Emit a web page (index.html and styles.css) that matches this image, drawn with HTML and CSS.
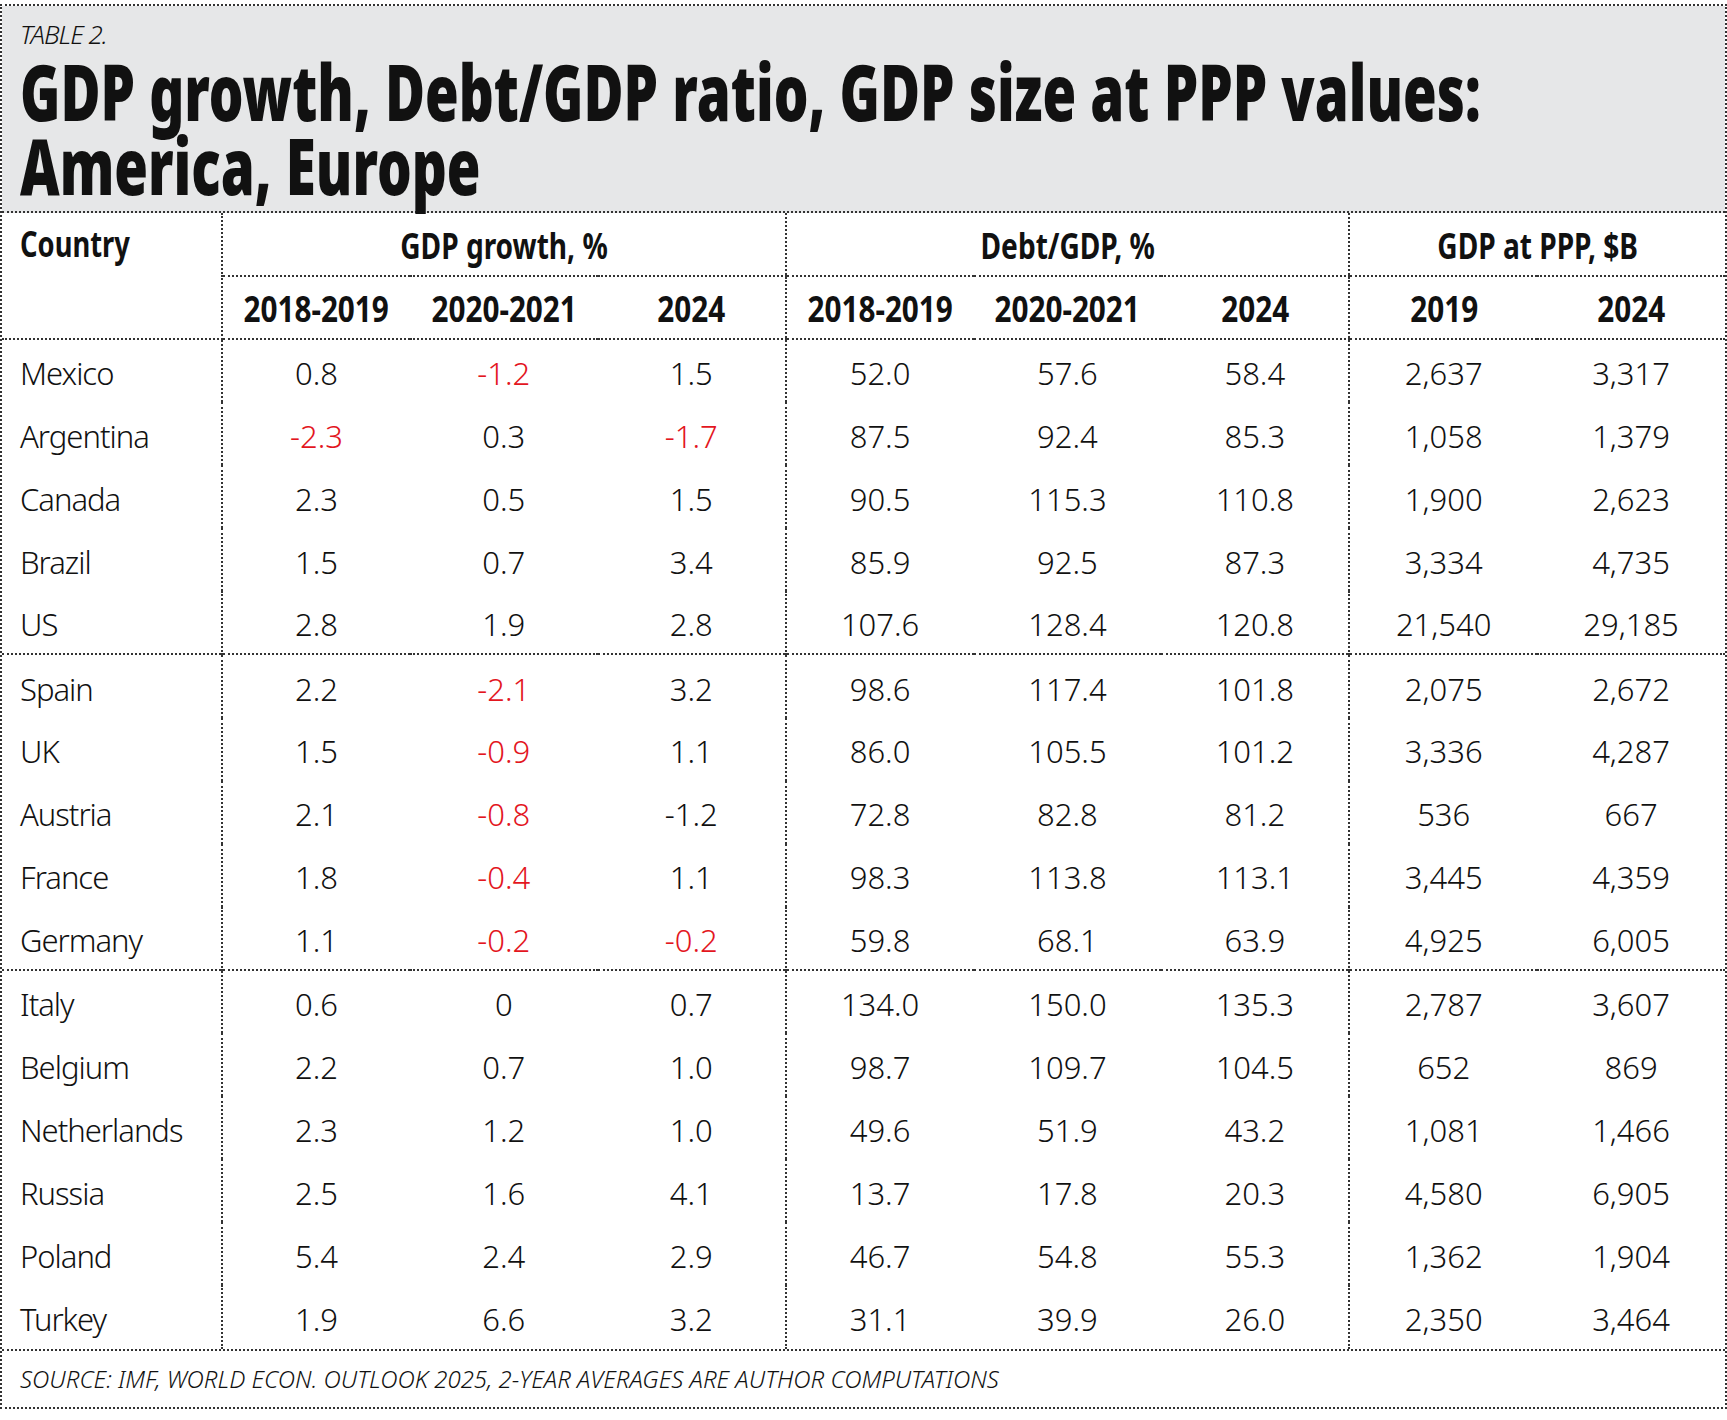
FILE: index.html
```html
<!DOCTYPE html>
<html lang="en">
<head>
<meta charset="utf-8">
<title>Table 2 – GDP growth, Debt/GDP ratio, GDP size at PPP values</title>
<link rel="stylesheet" href="styles.css">
</head>
<body>
<div class="sheet">
  <header class="banner">
    <div class="kicker">TABLE 2.</div>
    <h1 class="title"><span class="tline">GDP growth, Debt/GDP ratio, GDP size at PPP values:</span><span class="tline">America, Europe</span></h1>
  </header>
  <table class="data">
    <colgroup>
      <col class="c-country">
      <col><col><col><col><col><col><col><col>
    </colgroup>
    <thead>
      <tr class="grp">
        <th class="country-h" rowspan="2"><span class="sq sq-left">Country</span></th>
        <th class="g-start" colspan="3"><span class="sq">GDP growth, %</span></th>
        <th class="g-start" colspan="3"><span class="sq">Debt/GDP, %</span></th>
        <th class="g-start" colspan="2"><span class="sq">GDP at PPP, $B</span></th>
      </tr>
      <tr class="yrs">
        <th class="g-start"><span class="sq">2018-2019</span></th><th><span class="sq">2020-2021</span></th><th><span class="sq">2024</span></th>
        <th class="g-start"><span class="sq">2018-2019</span></th><th><span class="sq">2020-2021</span></th><th><span class="sq">2024</span></th>
        <th class="g-start"><span class="sq">2019</span></th><th><span class="sq">2024</span></th>
      </tr>
    </thead>
    <tbody>
      <tr><td class="name">Mexico</td><td class="g-start">0.8</td><td class="neg">-1.2</td><td>1.5</td><td class="g-start">52.0</td><td>57.6</td><td>58.4</td><td class="g-start">2,637</td><td>3,317</td></tr>
      <tr><td class="name">Argentina</td><td class="g-start neg">-2.3</td><td>0.3</td><td class="neg">-1.7</td><td class="g-start">87.5</td><td>92.4</td><td>85.3</td><td class="g-start">1,058</td><td>1,379</td></tr>
      <tr><td class="name">Canada</td><td class="g-start">2.3</td><td>0.5</td><td>1.5</td><td class="g-start">90.5</td><td>115.3</td><td>110.8</td><td class="g-start">1,900</td><td>2,623</td></tr>
      <tr><td class="name">Brazil</td><td class="g-start">1.5</td><td>0.7</td><td>3.4</td><td class="g-start">85.9</td><td>92.5</td><td>87.3</td><td class="g-start">3,334</td><td>4,735</td></tr>
      <tr><td class="name">US</td><td class="g-start">2.8</td><td>1.9</td><td>2.8</td><td class="g-start">107.6</td><td>128.4</td><td>120.8</td><td class="g-start">21,540</td><td>29,185</td></tr>
      <tr class="region"><td class="name">Spain</td><td class="g-start">2.2</td><td class="neg">-2.1</td><td>3.2</td><td class="g-start">98.6</td><td>117.4</td><td>101.8</td><td class="g-start">2,075</td><td>2,672</td></tr>
      <tr><td class="name">UK</td><td class="g-start">1.5</td><td class="neg">-0.9</td><td>1.1</td><td class="g-start">86.0</td><td>105.5</td><td>101.2</td><td class="g-start">3,336</td><td>4,287</td></tr>
      <tr><td class="name">Austria</td><td class="g-start">2.1</td><td class="neg">-0.8</td><td>-1.2</td><td class="g-start">72.8</td><td>82.8</td><td>81.2</td><td class="g-start">536</td><td>667</td></tr>
      <tr><td class="name">France</td><td class="g-start">1.8</td><td class="neg">-0.4</td><td>1.1</td><td class="g-start">98.3</td><td>113.8</td><td>113.1</td><td class="g-start">3,445</td><td>4,359</td></tr>
      <tr><td class="name">Germany</td><td class="g-start">1.1</td><td class="neg">-0.2</td><td class="neg">-0.2</td><td class="g-start">59.8</td><td>68.1</td><td>63.9</td><td class="g-start">4,925</td><td>6,005</td></tr>
      <tr class="region"><td class="name">Italy</td><td class="g-start">0.6</td><td>0</td><td>0.7</td><td class="g-start">134.0</td><td>150.0</td><td>135.3</td><td class="g-start">2,787</td><td>3,607</td></tr>
      <tr><td class="name">Belgium</td><td class="g-start">2.2</td><td>0.7</td><td>1.0</td><td class="g-start">98.7</td><td>109.7</td><td>104.5</td><td class="g-start">652</td><td>869</td></tr>
      <tr><td class="name">Netherlands</td><td class="g-start">2.3</td><td>1.2</td><td>1.0</td><td class="g-start">49.6</td><td>51.9</td><td>43.2</td><td class="g-start">1,081</td><td>1,466</td></tr>
      <tr><td class="name">Russia</td><td class="g-start">2.5</td><td>1.6</td><td>4.1</td><td class="g-start">13.7</td><td>17.8</td><td>20.3</td><td class="g-start">4,580</td><td>6,905</td></tr>
      <tr><td class="name">Poland</td><td class="g-start">5.4</td><td>2.4</td><td>2.9</td><td class="g-start">46.7</td><td>54.8</td><td>55.3</td><td class="g-start">1,362</td><td>1,904</td></tr>
      <tr><td class="name">Turkey</td><td class="g-start">1.9</td><td>6.6</td><td>3.2</td><td class="g-start">31.1</td><td>39.9</td><td>26.0</td><td class="g-start">2,350</td><td>3,464</td></tr>
    </tbody>
  </table>
  <footer class="source">SOURCE: IMF, WORLD ECON. OUTLOOK 2025, 2-YEAR AVERAGES ARE AUTHOR COMPUTATIONS</footer>
</div>
</body>
</html>
```
FILE: styles.css
```css
html, body {
  margin: 0;
  padding: 0;
  background: #ffffff;
}

body {
  font-family: "Noto Sans", "DejaVu Sans", sans-serif;
  color: #111111;
  padding-top: 4px;
}

.sheet {
  width: 1727px;
  box-sizing: border-box;
  border: 2px dotted #333333;
  display: flex;
  flex-direction: column;
}

/* ---------- banner ---------- */
.banner {
  background: #e6e7e8;
  padding: 13px 0 9px 18px;
  border-bottom: 2px dotted #333333;
}

.kicker {
  font-size: 26px;
  line-height: 30px;
  font-style: italic;
  font-weight: 300;
  letter-spacing: -1px;
}

.title {
  margin: 5px 0 0 0;
  font-size: 78px;
  line-height: 74px;
  font-weight: 900;
  white-space: nowrap;
}

.tline {
  display: block;
  transform: scaleX(0.7);
  transform-origin: left center;
}

/* ---------- table ---------- */
.data {
  width: 100%;
  border-collapse: collapse;
  table-layout: fixed;
}

.c-country {
  width: 220px;
}

.data th,
.data td {
  box-sizing: border-box;
  padding: 0;
  text-align: center;
  vertical-align: middle;
  white-space: nowrap;
}

.data th {
  font-weight: 700;
  font-size: 36px;
}

.sq {
  display: inline-block;
  transform: scaleX(0.78);
  transform-origin: center;
}

.yrs .sq {
  transform: scaleX(0.825);
}

.sq-left {
  transform: scaleX(0.76);
  transform-origin: left center;
}

.grp th {
  height: 63px;
  padding-top: 3px;
  border-bottom: 2px dotted #333333;
}

.yrs th {
  height: 63px;
  padding-top: 2px;
  border-bottom: 2px dotted #333333;
}

.data .country-h {
  text-align: left;
  vertical-align: top;
  padding: 6px 0 0 18px;
  border-right: 2px dotted #333333;
}

.data td {
  font-size: 31px;
  font-weight: 300;
  height: 63.1px;
  padding-top: 4px;
}

.data .g-start {
  border-left: 2px dotted #333333;
}

.data td.name {
  text-align: left;
  padding-left: 18px;
  letter-spacing: -1px;
}

.data .neg {
  color: #e3161e;
}

.region td {
  border-top: 2px dotted #333333;
}

/* ---------- source ---------- */
.source {
  border-top: 2px dotted #333333;
  height: 56px;
  display: flex;
  align-items: center;
  padding-left: 18px;
  font-size: 24px;
  font-style: italic;
  font-weight: 300;
}
```
